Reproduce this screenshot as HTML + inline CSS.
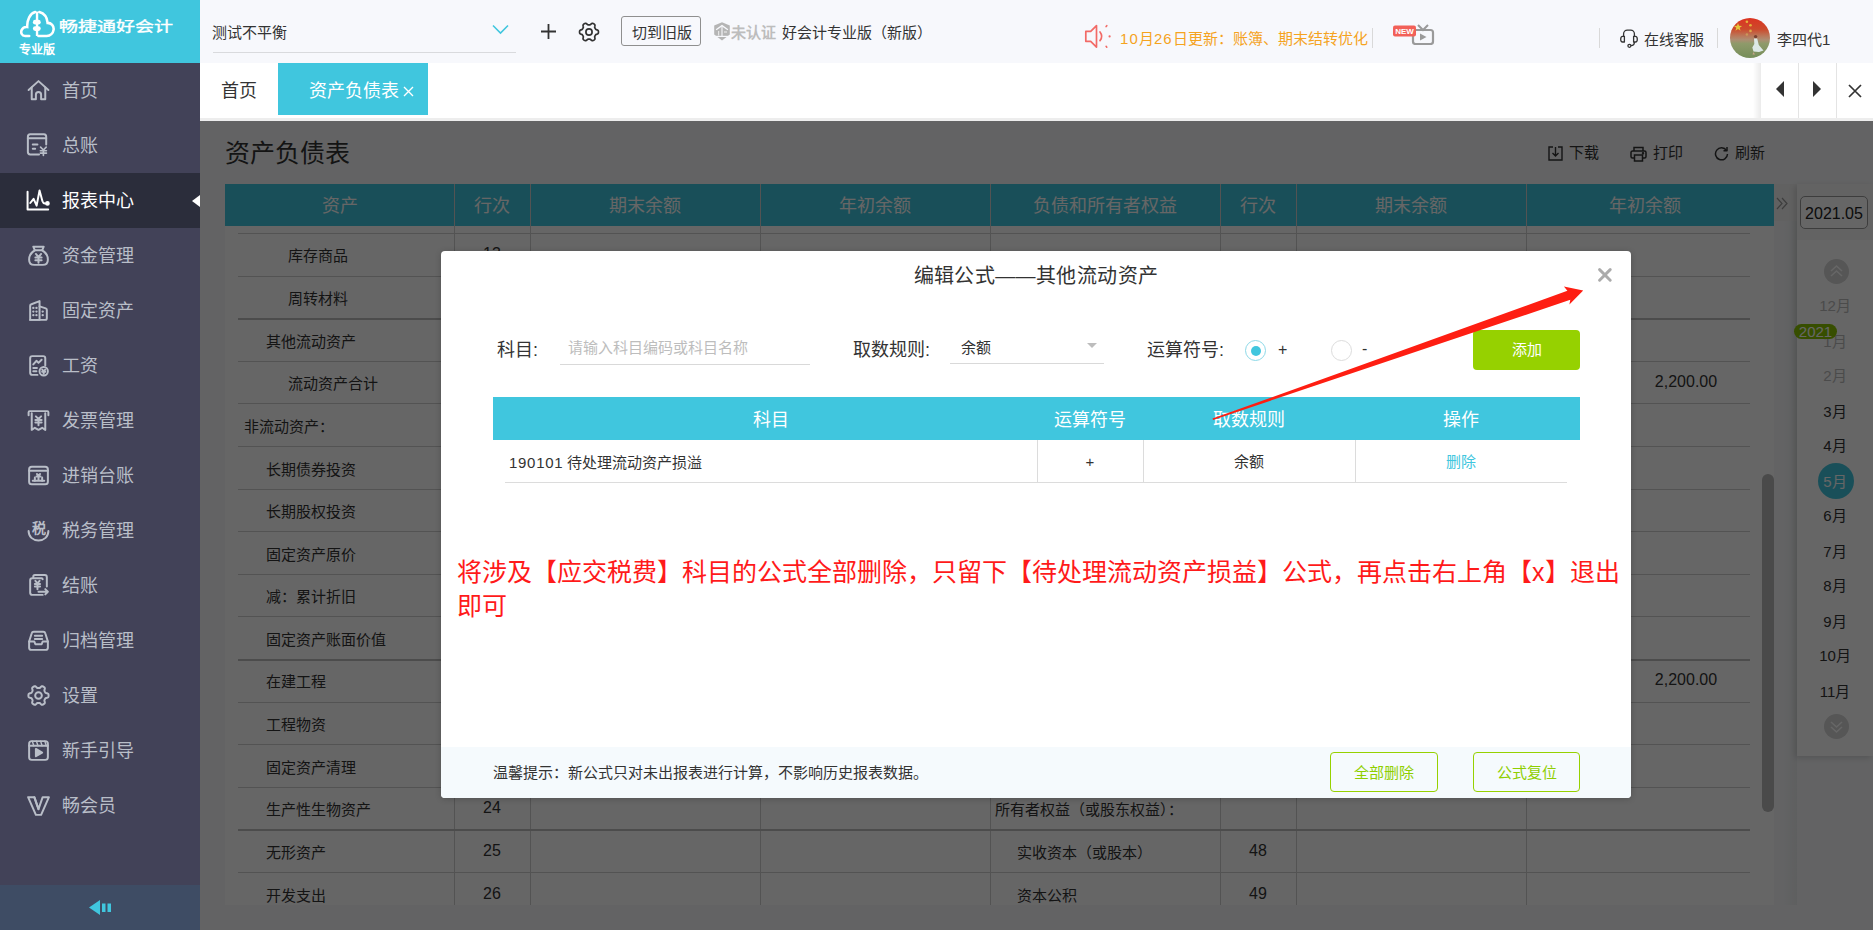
<!DOCTYPE html>
<html lang="zh-CN"><head><meta charset="utf-8">
<style>
*{margin:0;padding:0;box-sizing:border-box}
html,body{width:1873px;height:930px;overflow:hidden;background:#f7f8fc}
body{position:relative;font-family:"Liberation Sans",sans-serif;color:#333}
.a{position:absolute;white-space:nowrap}
.t{line-height:1}
/* sidebar */
#side{position:absolute;left:0;top:0;width:200px;height:930px;background:#424258}
#logo{position:absolute;left:0;top:0;width:200px;height:63px;background:#40c6de}
.mi{position:absolute;left:0;width:200px;height:55px}
.mi .ic{position:absolute;left:26px;top:15px;width:25px;height:25px}
.mi .tx{position:absolute;left:62px;top:19px;font-size:18px;line-height:18px;color:#b9bec8}
.mi.on{background:#2b2d3b}
.mi.on .tx{color:#fff}
#sbot{position:absolute;left:0;top:885px;width:200px;height:45px;background:#3e4c64}
/* header */
#hdr{position:absolute;left:200px;top:0;width:1673px;height:63px;background:#f7f8fc}
#tabs{position:absolute;left:200px;top:63px;width:1673px;height:58px;background:#fff}
/* content */
#content{position:absolute;left:200px;top:121px;width:1673px;height:809px;background:#f7f8fa;overflow:hidden}
#mask{position:absolute;left:200px;top:121px;width:1673px;height:809px;background:rgba(0,0,0,0.6)}
</style></head>
<body>
<div id="side">
  <div id="logo">
    <svg class="a" style="left:20px;top:10px" width="35" height="28" viewBox="0 0 38 30">
      <path d="M10 28 H5.5 C2 28 0.5 24.5 1.8 21.5 C3 18.8 5.5 18 7.8 18.3 C7.5 10.5 11 3.5 16.5 2" fill="none" stroke="#fff" stroke-width="2.8" stroke-linecap="round"/>
      <path d="M21 2 C26.5 3.5 29.5 8.5 30 13.8 C34 13.8 37 17 36.5 21.2 C36 25 33 28 29 28 H20" fill="none" stroke="#fff" stroke-width="2.8" stroke-linecap="round"/>
      <path d="M18.5 1.5 V28" stroke="#fff" stroke-width="2.6"/>
      <rect x="14" y="10.5" width="8.5" height="5" rx="2.5" fill="#fff"/>
      <rect x="14" y="17.5" width="8.5" height="5" rx="2.5" fill="#fff"/>
    </svg>
    <div class="a t" style="left:59px;top:17px;font-size:19px;line-height:19px;color:#fff;-webkit-text-stroke:0.5px #fff;letter-spacing:0px;transform:scaleY(0.72);transform-origin:0 50%">畅捷通好会计</div>
    <div class="a t" style="left:19px;top:44px;font-size:12px;line-height:12px;color:#fff;font-weight:bold">专业版</div>
  </div>
  <div class="mi" style="top:63px"><svg class="ic" width="24" height="24" viewBox="0 0 24 24" fill="none" stroke="#b9bec8" stroke-width="1.9" stroke-linecap="round" stroke-linejoin="round"><path d="M2.5 11.5 L12 3 L21.5 11.5"/><path d="M5.5 9 V20.5 H9.5 V16 A2.5 2.5 0 0 1 14.5 16 V20.5 H18.5 V9"/></svg><div class="tx">首页</div></div>
  <div class="mi" style="top:118px"><svg class="ic" width="24" height="24" viewBox="0 0 24 24" fill="none" stroke="#b9bec8" stroke-width="1.9" stroke-linecap="round" stroke-linejoin="round"><path d="M12.5 20.6 H4 A2.3 2.3 0 0 1 1.8 18.4 V3.6 A2.3 2.3 0 0 1 4 1.3 H17.2 A2.3 2.3 0 0 1 19.4 3.6 V11"/><path d="M1.8 5 H19.4"/><path d="M6.5 11 H11 M6.5 15.2 H8.8"/><path d="M14 13.6 L16.7 16.3 L19.4 13.6 M13.8 17 H19.6 M13.8 19.3 H19.6 M16.7 16.3 V21.5" stroke-width="1.6"/></svg><div class="tx">总账</div></div>
  <div class="mi on" style="top:173px"><svg class="ic" width="24" height="24" viewBox="0 0 24 24" fill="none" stroke="#fff" stroke-width="1.9" stroke-linecap="round" stroke-linejoin="round"><path d="M1.5 3.6 V20.6 H21.3"/><path d="M4.1 14.4 L7.3 10.4 L10.2 16.9 L13 2.4 L15.8 12.8 Q16.4 14.8 18.2 14.8 H20"/><circle cx="20.6" cy="14.8" r="1.3" fill="#fff"/></svg><div class="tx">报表中心</div><svg class="a" style="left:192px;top:22px" width="8" height="12" viewBox="0 0 8 12"><path d="M8 0 L0 6 L8 12 Z" fill="#fff"/></svg></div>
  <div class="mi" style="top:228px"><svg class="ic" width="24" height="24" viewBox="0 0 24 24" fill="none" stroke="#b9bec8" stroke-width="1.9" stroke-linecap="round" stroke-linejoin="round"><path d="M8.5 7 L7 3.5 H17 L15.5 7"/><path d="M8.5 7 C4 9.5 3 13 3 16 C3 19.5 5 21 8 21 H16 C19 21 21 19.5 21 16 C21 13 20 9.5 15.5 7 Z"/><path d="M9.5 10.5 L12 13.5 L14.5 10.5 M9 14 H15 M9 16.5 H15 M12 13.5 V19"/></svg><div class="tx">资金管理</div></div>
  <div class="mi" style="top:283px"><svg class="ic" width="24" height="24" viewBox="0 0 24 24" fill="none" stroke="#b9bec8" stroke-width="1.9" stroke-linecap="round" stroke-linejoin="round"><path d="M4 21 V7.5 A1.5 1.5 0 0 1 5.2 6 L13 3 V21 Z"/><path d="M13 8 L19 10 A1.5 1.5 0 0 1 20 11.5 V19.5 A1.5 1.5 0 0 1 18.5 21 H4"/><path d="M7 9.5 H7.1 M10 9.5 H10.1 M7 13 H7.1 M10 13 H10.1 M7 16.5 H7.1 M10 16.5 H10.1 M16 13 H16.1 M16 16.5 H16.1" stroke-width="2.2"/></svg><div class="tx">固定资产</div></div>
  <div class="mi" style="top:338px"><svg class="ic" width="24" height="24" viewBox="0 0 24 24" fill="none" stroke="#b9bec8" stroke-width="1.9" stroke-linecap="round" stroke-linejoin="round"><path d="M11 21 H6 A2 2 0 0 1 4 19 V5 A2 2 0 0 1 6 3 H16.5 A2 2 0 0 1 18.5 5 V12"/><path d="M7 11 L10 7.5 L12 9.5 L15 6.5"/><path d="M7 14.5 H10.5 M7 17.5 H10"/><circle cx="17" cy="17.5" r="4"/><path d="M15.5 16 L17 17.5 L18.5 16 M15.5 18 H18.5 M17 17.5 V20"/></svg><div class="tx">工资</div></div>
  <div class="mi" style="top:393px"><svg class="ic" width="24" height="24" viewBox="0 0 24 24" fill="none" stroke="#b9bec8" stroke-width="1.9" stroke-linecap="round" stroke-linejoin="round"><path d="M2.5 7 V4 A1 1 0 0 1 3.5 3 H20.5 A1 1 0 0 1 21.5 4 V7"/><path d="M5.5 5 V21 L8.5 19 L12 21 L15.5 19 L18.5 21 V5"/><path d="M9.5 8 L12 10.5 L14.5 8 M9 11.5 H15 M9 14 H15 M12 10.5 V16.5"/></svg><div class="tx">发票管理</div></div>
  <div class="mi" style="top:448px"><svg class="ic" width="24" height="24" viewBox="0 0 24 24" fill="none" stroke="#b9bec8" stroke-width="1.9" stroke-linecap="round" stroke-linejoin="round"><rect x="3" y="3.5" width="18" height="17" rx="2.5"/><path d="M3 7.5 H21"/><path d="M6.5 17 H17.5"/><path d="M8.5 17 V14 M15.5 17 V14"/><path d="M10.5 10.5 L12 12 L13.5 10.5 M10 13 H14 M12 12 V16"/></svg><div class="tx">进销台账</div></div>
  <div class="mi" style="top:503px"><svg class="ic" width="24" height="24" viewBox="0 0 24 24" fill="none" stroke="#b9bec8" stroke-width="1.9" stroke-linecap="round" stroke-linejoin="round"><path d="M2.5 12.5 C2.5 18 6.5 21.5 12 21.5 C17.5 21.5 21.5 18 21.5 12.5"/><text x="12" y="14.5" font-size="13.5" font-weight="bold" text-anchor="middle" fill="#b9bec8" stroke="none" font-family="Liberation Sans,sans-serif">税</text></svg><div class="tx">税务管理</div></div>
  <div class="mi" style="top:558px"><svg class="ic" width="24" height="24" viewBox="0 0 24 24" fill="none" stroke="#b9bec8" stroke-width="1.9" stroke-linecap="round" stroke-linejoin="round"><path d="M7 4 V3.5 A1.5 1.5 0 0 1 8.5 2 H18 A2 2 0 0 1 20 4 V13"/><path d="M16 21 H6 A2 2 0 0 1 4 19 V7 A2 2 0 0 1 6 5 H15 A1 1 0 0 1 16 6"/><path d="M9 7.5 L11 10 L13 7.5 M8.5 10.5 H13.5 M8.5 13 H13.5 M11 10 V15.5"/><path d="M12 18 H21 M18.5 15.5 L21 18 L18.5 20.5"/></svg><div class="tx">结账</div></div>
  <div class="mi" style="top:613px"><svg class="ic" width="24" height="24" viewBox="0 0 24 24" fill="none" stroke="#b9bec8" stroke-width="1.9" stroke-linecap="round" stroke-linejoin="round"><path d="M3 13 L5.5 5 A2 2 0 0 1 7.5 3.5 H16.5 A2 2 0 0 1 18.5 5 L21 13"/><path d="M3 13 V19 A2 2 0 0 0 5 21 H19 A2 2 0 0 0 21 19 V13 H16 L15 15.5 H9 L8 13 Z"/><path d="M8.5 7.5 H15.5 M8.5 10.5 H15.5"/></svg><div class="tx">归档管理</div></div>
  <div class="mi" style="top:668px"><svg class="ic" width="24" height="24" viewBox="0 0 24 24" fill="none" stroke="#b9bec8" stroke-width="1.9" stroke-linecap="round" stroke-linejoin="round"><path d="M21.70 12.00 L21.66 12.63 L21.52 13.25 L21.09 13.81 L20.11 14.17 L19.13 14.42 L18.65 14.76 L18.38 15.15 L18.15 15.55 L17.92 15.95 L17.71 16.38 L17.66 16.97 L17.94 17.94 L18.11 18.97 L17.84 19.61 L17.38 20.05 L16.85 20.40 L16.28 20.68 L15.67 20.87 L14.98 20.78 L14.17 20.11 L13.47 19.39 L12.94 19.14 L12.47 19.10 L12.00 19.10 L11.53 19.10 L11.06 19.14 L10.53 19.39 L9.83 20.11 L9.02 20.78 L8.33 20.87 L7.72 20.68 L7.15 20.40 L6.62 20.05 L6.16 19.61 L5.89 18.97 L6.06 17.94 L6.34 16.97 L6.29 16.38 L6.08 15.95 L5.85 15.55 L5.62 15.15 L5.35 14.76 L4.87 14.42 L3.89 14.17 L2.91 13.81 L2.48 13.25 L2.34 12.63 L2.30 12.00 L2.34 11.37 L2.48 10.75 L2.91 10.19 L3.89 9.83 L4.87 9.58 L5.35 9.24 L5.62 8.85 L5.85 8.45 L6.08 8.05 L6.29 7.62 L6.34 7.03 L6.06 6.06 L5.89 5.03 L6.16 4.39 L6.62 3.95 L7.15 3.60 L7.72 3.32 L8.33 3.13 L9.02 3.22 L9.83 3.89 L10.53 4.61 L11.06 4.86 L11.53 4.90 L12.00 4.90 L12.47 4.90 L12.94 4.86 L13.47 4.61 L14.17 3.89 L14.98 3.22 L15.67 3.13 L16.28 3.32 L16.85 3.60 L17.38 3.95 L17.84 4.39 L18.11 5.03 L17.94 6.06 L17.66 7.03 L17.71 7.62 L17.92 8.05 L18.15 8.45 L18.38 8.85 L18.65 9.24 L19.13 9.58 L20.11 9.83 L21.09 10.19 L21.52 10.75 L21.66 11.37 L21.70 12.00 Z"/><circle cx="12" cy="12" r="3.2"/></svg><div class="tx">设置</div></div>
  <div class="mi" style="top:723px"><svg class="ic" width="24" height="24" viewBox="0 0 24 24" fill="none" stroke="#b9bec8" stroke-width="1.9" stroke-linecap="round" stroke-linejoin="round"><rect x="3" y="3" width="18" height="18" rx="2.5"/><path d="M3 7.5 H21"/><path d="M6 3 L7.5 7.5 M10 3 L11.5 7.5 M14 3 L15.5 7.5 M18 3 L19.5 7.5" stroke-width="1.4"/><path d="M9.5 10.5 L15.5 14 L9.5 17.5 Z" fill="#b9bec8"/></svg><div class="tx">新手引导</div></div>
  <div class="mi" style="top:778px"><svg class="ic" width="24" height="24" viewBox="0 0 24 24" fill="none" stroke="#b9bec8" stroke-width="1.9" stroke-linecap="round" stroke-linejoin="round"><path d="M2 4 H8 L12 15.5 L16 4 H22 L14.5 21 H9.5 Z"/><path d="M8 4 L12 15.5" /></svg><div class="tx">畅会员</div></div>
  <div id="sbot">
    <svg class="a" style="left:88px;top:13px" width="24" height="19" viewBox="0 0 24 19">
      <path d="M1 9.5 L12 2 V17 Z" fill="#40c6de"/>
      <rect x="14" y="5.5" width="3.5" height="8.5" fill="#40c6de"/>
      <rect x="19.5" y="5.5" width="3.5" height="8.5" fill="#40c6de"/>
    </svg>
  </div>
</div>

<div id="hdr">
    <div class="a t" style="left:12px;top:25px;font-size:15px;line-height:15px;color:#333">测试不平衡</div>
  <div class="a" style="left:13px;top:52px;width:303px;height:1px;background:#d9dadd"></div>
  <svg class="a" style="left:292px;top:24px" width="17" height="11" viewBox="0 0 17 11"><path d="M1 1.5 L8.5 9 L16 1.5" fill="none" stroke="#40c6de" stroke-width="1.6"/></svg>
  <svg class="a" style="left:340px;top:23px" width="17" height="17" viewBox="0 0 17 17"><path d="M8.5 1 V16 M1 8.5 H16" stroke="#333" stroke-width="1.8"/></svg>
  <svg class="a" style="left:377px;top:19.5px" width="24" height="24" viewBox="0 0 24 24" fill="none" stroke="#333" stroke-width="1.7" stroke-linejoin="round"><path d="M21.45 12.00 L21.41 12.62 L21.28 13.22 L20.89 13.77 L20.02 14.15 L19.13 14.42 L18.69 14.77 L18.43 15.17 L18.19 15.57 L17.96 15.98 L17.74 16.41 L17.66 16.97 L17.87 17.87 L17.98 18.82 L17.70 19.43 L17.24 19.84 L16.73 20.18 L16.17 20.46 L15.58 20.65 L14.91 20.59 L14.15 20.02 L13.47 19.39 L12.95 19.18 L12.47 19.15 L12.00 19.15 L11.53 19.15 L11.05 19.18 L10.53 19.39 L9.85 20.02 L9.09 20.59 L8.42 20.65 L7.83 20.46 L7.28 20.18 L6.76 19.84 L6.30 19.43 L6.02 18.82 L6.13 17.87 L6.34 16.97 L6.26 16.41 L6.04 15.98 L5.81 15.57 L5.57 15.17 L5.31 14.77 L4.87 14.42 L3.98 14.15 L3.11 13.77 L2.72 13.22 L2.59 12.62 L2.55 12.00 L2.59 11.38 L2.72 10.78 L3.11 10.23 L3.98 9.85 L4.87 9.58 L5.31 9.23 L5.57 8.83 L5.81 8.43 L6.04 8.02 L6.26 7.59 L6.34 7.03 L6.13 6.13 L6.02 5.18 L6.30 4.57 L6.76 4.16 L7.27 3.82 L7.83 3.54 L8.42 3.35 L9.09 3.41 L9.85 3.98 L10.53 4.61 L11.05 4.82 L11.53 4.85 L12.00 4.85 L12.47 4.85 L12.95 4.82 L13.47 4.61 L14.15 3.98 L14.91 3.41 L15.58 3.35 L16.17 3.54 L16.73 3.82 L17.24 4.16 L17.70 4.57 L17.98 5.18 L17.87 6.13 L17.66 7.03 L17.74 7.59 L17.96 8.02 L18.19 8.42 L18.43 8.83 L18.69 9.23 L19.13 9.58 L20.02 9.85 L20.89 10.23 L21.28 10.78 L21.41 11.38 L21.45 12.00 Z"/><circle cx="12" cy="12" r="3.1"/></svg>
  <div class="a" style="left:421px;top:16px;width:80px;height:30px;border:1px solid #8f8f8f;border-radius:3px"></div>
  <div class="a t" style="left:432px;top:25px;font-size:15px;line-height:15px;color:#333">切到旧版</div>
  <svg class="a" style="left:513px;top:21px" width="18" height="21" viewBox="0 0 18 21"><path d="M9 1.2 L16.8 4.4 V13.6 L9 19.6 L1.2 13.6 V4.4 Z" fill="#b5b5b5"/><path d="M3.1 8.8 L9 4.6 L14.9 8.8" fill="none" stroke="#f7f8fc" stroke-width="1.3"/><path d="M9 5.5 V15.3" stroke="#f7f8fc" stroke-width="1.1"/><path d="M5.6 10 V14.6" stroke="#e4e4e4" stroke-width="1.2"/><path d="M11 11 H14" stroke="#e4e4e4" stroke-width="1.3"/><path d="M2.4 15.4 H15.6" stroke="#f7f8fc" stroke-width="1.2"/></svg>
  <div class="a t" style="left:531px;top:25px;font-size:15px;line-height:15px;color:#bdbdbd;font-weight:bold">未认证</div>
  <div class="a t" style="left:582px;top:25px;font-size:15px;line-height:15px;color:#333">好会计专业版（新版）</div>
  <svg class="a" style="left:884px;top:24px" width="28" height="25" viewBox="0 0 28 25" fill="none" stroke="#f26a66" stroke-width="1.7" stroke-linejoin="round" stroke-linecap="round"><path d="M1.8 7.4 H6.7 L12.5 1.6 V23.1 L6.7 17.3 H1.8 Z"/><path d="M16 8 Q19.4 12.4 16 16.6"/><path d="M22.1 2.6 L22.8 1.7 M22.1 22.3 L22.8 23.2" stroke-width="1.6"/><circle cx="25.6" cy="12.4" r="1.1" fill="#f26a66" stroke="none"/></svg>
  <div class="a t" style="left:920px;top:31px;font-size:15px;line-height:15px;color:#f5a31e"><span style="letter-spacing:1.1px">10</span>月<span style="letter-spacing:1.1px">26</span>日更新：账簿、期末结转优化</div>
  <div class="a" style="left:1172px;top:28px;width:1px;height:20px;background:#d9d9d9"></div>
  <svg class="a" style="left:1193px;top:23px" width="42" height="22" viewBox="0 0 42 22"><rect x="20" y="7" width="20" height="14" rx="2.5" fill="none" stroke="#9a9a9a" stroke-width="2.2"/><path d="M25 2 L30 7 L35 2" fill="none" stroke="#9a9a9a" stroke-width="2"/><path d="M27 10.5 L33.5 14 L27 17.5 Z" fill="#9a9a9a"/><rect x="0" y="2.5" width="23" height="11" rx="2" fill="#f26058"/><text x="11.5" y="11.2" font-size="8" font-weight="bold" fill="#fff" text-anchor="middle" font-family="Liberation Sans,sans-serif">NEW</text></svg>
  <div class="a" style="left:1399px;top:28px;width:1px;height:20px;background:#d9d9d9"></div>
  <svg class="a" style="left:1418px;top:27px" width="22" height="22" viewBox="0 0 22 22" fill="none" stroke="#333" stroke-width="1.3" stroke-linejoin="round"><path d="M5.6 9.3 V6.8 A3.7 3.7 0 0 1 9.3 3.1 H12.7 A3.7 3.7 0 0 1 16.4 6.8 V9.3"/><path d="M6.4 9.3 H4.6 A1.9 2.85 0 0 0 4.6 15 H6.4 Z"/><path d="M15.6 9.3 H17.4 A1.9 2.85 0 0 1 17.4 15 H15.6 Z"/><path d="M16.4 15 C16.4 17.3 14.8 18.7 12.9 18.7"/><circle cx="11.4" cy="18.8" r="1.5"/></svg>
  <div class="a t" style="left:1444px;top:32px;font-size:15px;line-height:15px;color:#333">在线客服</div>
  <div class="a" style="left:1517px;top:28px;width:1px;height:20px;background:#d9d9d9"></div>
  <div class="a" style="left:1530px;top:18px;width:40px;height:40px;border-radius:50%;overflow:hidden;background:linear-gradient(180deg,#dc3321 0%,#cc4a2c 28%,#bb7658 44%,#ae8d72 54%,#8e9a6a 64%,#768e5a 100%)">
    <svg width="40" height="40" viewBox="0 0 40 40" style="position:absolute;left:0;top:0"><path d="M8.00 5.00 L9.06 7.84 L12.09 7.97 L9.71 9.86 L10.53 12.78 L8.00 11.10 L5.47 12.78 L6.29 9.86 L3.91 7.97 L6.94 7.84 Z" fill="#e6c53a"/><circle cx="16.9" cy="3.8" r="1.3" fill="#e2b43a"/><circle cx="20.5" cy="7.3" r="1.3" fill="#e2b43a"/><circle cx="20.5" cy="12.9" r="1.3" fill="#dca848"/><circle cx="16.9" cy="16.5" r="1.2" fill="#c9995a"/><circle cx="25.6" cy="18.6" r="1.7" fill="#7a4030"/><path d="M24 20.5 L27.2 20.5 L28.8 27 L33.5 32.5 L29 34 L23.5 33.5 L22.3 29.5 L24.3 26 Z" fill="#dde8e6"/><path d="M23.5 34 L22.5 36.5 L25 36.5 Z" fill="#c8a58a"/></svg>
  </div>
  <div class="a t" style="left:1577px;top:32px;font-size:15px;line-height:15px;color:#333">李四代1</div>

</div>

<div id="tabs">
    <div class="a t" style="left:21px;top:19px;font-size:18px;line-height:18px;color:#333">首页</div>
  <div class="a" style="left:78px;top:0;width:150px;height:52px;background:#40c6de"></div>
  <div class="a t" style="left:109px;top:19px;font-size:18px;line-height:18px;color:#fff">资产负债表</div>
  <svg class="a" style="left:203px;top:23px" width="11" height="11" viewBox="0 0 11 11"><path d="M1 1 L10 10 M10 1 L1 10" stroke="#fff" stroke-width="1.4"/></svg>
  <div class="a" style="left:0;top:55px;width:1673px;height:3px;background:#ededed"></div>
  <div class="a" style="left:1553px;top:0;width:8px;height:55px;background:linear-gradient(90deg,rgba(0,0,0,0),rgba(0,0,0,0.08))"></div>
  <div class="a" style="left:1561px;top:0;width:112px;height:55px;background:#fff"></div>
  <div class="a" style="left:1598px;top:0;width:1px;height:55px;background:#e4e4e4"></div>
  <div class="a" style="left:1636px;top:0;width:1px;height:55px;background:#e4e4e4"></div>
  <svg class="a" style="left:1576px;top:18px" width="8" height="16" viewBox="0 0 8 16"><path d="M8 0 L0 8 L8 16 Z" fill="#333"/></svg>
  <svg class="a" style="left:1613px;top:18px" width="8" height="16" viewBox="0 0 8 16"><path d="M0 0 L8 8 L0 16 Z" fill="#333"/></svg>
  <svg class="a" style="left:1648px;top:21px" width="14" height="14" viewBox="0 0 14 14"><path d="M1 1 L13 13 M13 1 L1 13" stroke="#333" stroke-width="1.7"/></svg>

</div>

<div id="content">
  <div class="a" style="left:25px;top:20px;font-size:25px;line-height:25px;color:#333">资产负债表</div>
  <div class="a" style="left:1348px;top:25px;width:15px;height:15px"><svg width="15" height="15" viewBox="0 0 15 15" fill="none" stroke="#333" stroke-width="1.4"><path d="M5 1 H1 V14 H14 V1 H10"/><path d="M7.5 1 V10 M4.5 7 L7.5 10 L10.5 7"/></svg></div>
  <div class="a" style="left:1369px;top:24px;font-size:15px;line-height:15px;color:#333">下载</div>
  <div class="a" style="left:1430px;top:25px;width:17px;height:16px"><svg width="17" height="16" viewBox="0 0 17 16" fill="none" stroke="#333" stroke-width="1.5"><path d="M4 5 V1.5 H13 V5"/><path d="M4 12 H2.5 A1.5 1.5 0 0 1 1 10.5 V6.5 A1.5 1.5 0 0 1 2.5 5 H14.5 A1.5 1.5 0 0 1 16 6.5 V10.5 A1.5 1.5 0 0 1 14.5 12 H13"/><rect x="4.5" y="9" width="8" height="6"/><circle cx="13" cy="7.3" r="0.5" fill="#333"/></svg></div>
  <div class="a" style="left:1453px;top:24px;font-size:15px;line-height:15px;color:#333">打印</div>
  <div class="a" style="left:1514px;top:25px;width:15px;height:15px"><svg width="15" height="15" viewBox="0 0 15 15" fill="none" stroke="#333" stroke-width="1.5"><path d="M12.5 4.5 A6 6 0 1 0 13.5 8"/><path d="M13 1 V4.8 H9.5" stroke-linejoin="round"/></svg></div>
  <div class="a" style="left:1535px;top:24px;font-size:15px;line-height:15px;color:#333">刷新</div>
  <div class="a" style="left:25px;top:105px;width:1549px;height:679px;background:#fff"></div>
  <div class="a" style="left:25px;top:63px;width:1549px;height:42px;background:#40c6de"></div>
  <div class="a" style="left:25px;top:76px;width:229px;text-align:center;font-size:18px;line-height:18px;color:#fff">资产</div>
  <div class="a" style="left:254px;top:76px;width:76px;text-align:center;font-size:18px;line-height:18px;color:#fff">行次</div>
  <div class="a" style="left:330px;top:76px;width:230px;text-align:center;font-size:18px;line-height:18px;color:#fff">期末余额</div>
  <div class="a" style="left:560px;top:76px;width:230px;text-align:center;font-size:18px;line-height:18px;color:#fff">年初余额</div>
  <div class="a" style="left:790px;top:76px;width:230px;text-align:center;font-size:18px;line-height:18px;color:#fff">负债和所有者权益</div>
  <div class="a" style="left:1020px;top:76px;width:76px;text-align:center;font-size:18px;line-height:18px;color:#fff">行次</div>
  <div class="a" style="left:1096px;top:76px;width:230px;text-align:center;font-size:18px;line-height:18px;color:#fff">期末余额</div>
  <div class="a" style="left:1326px;top:76px;width:238px;text-align:center;font-size:18px;line-height:18px;color:#fff">年初余额</div>
  <div class="a" style="left:254px;top:63px;width:1px;height:721px;background:#cfcfcf"></div>
  <div class="a" style="left:330px;top:63px;width:1px;height:721px;background:#cfcfcf"></div>
  <div class="a" style="left:560px;top:63px;width:1px;height:721px;background:#cfcfcf"></div>
  <div class="a" style="left:790px;top:63px;width:1px;height:721px;background:#cfcfcf"></div>
  <div class="a" style="left:1020px;top:63px;width:1px;height:721px;background:#cfcfcf"></div>
  <div class="a" style="left:1096px;top:63px;width:1px;height:721px;background:#cfcfcf"></div>
  <div class="a" style="left:1326px;top:63px;width:1px;height:721px;background:#cfcfcf"></div>
  <div class="a" style="left:88px;top:126.5px;font-size:15px;line-height:15px;color:#333">库存商品</div>
  <div class="a" style="left:254px;top:125.0px;width:76px;text-align:center;font-size:16px;line-height:16px;color:#333">13</div>
  <div class="a" style="left:88px;top:169.5px;font-size:15px;line-height:15px;color:#333">周转材料</div>
  <div class="a" style="left:66px;top:212.5px;font-size:15px;line-height:15px;color:#333">其他流动资产</div>
  <div class="a" style="left:88px;top:254.5px;font-size:15px;line-height:15px;color:#333">流动资产合计</div>
  <div class="a" style="left:1326px;top:253.0px;width:320px;text-align:center;font-size:16px;line-height:16px;color:#333">2,200.00</div>
  <div class="a" style="left:44px;top:297.5px;font-size:15px;line-height:15px;color:#333">非流动资产：</div>
  <div class="a" style="left:66px;top:340.5px;font-size:15px;line-height:15px;color:#333">长期债券投资</div>
  <div class="a" style="left:66px;top:382.5px;font-size:15px;line-height:15px;color:#333">长期股权投资</div>
  <div class="a" style="left:66px;top:425.5px;font-size:15px;line-height:15px;color:#333">固定资产原价</div>
  <div class="a" style="left:66px;top:467.5px;font-size:15px;line-height:15px;color:#333">减：累计折旧</div>
  <div class="a" style="left:66px;top:510.5px;font-size:15px;line-height:15px;color:#333">固定资产账面价值</div>
  <div class="a" style="left:66px;top:552.5px;font-size:15px;line-height:15px;color:#333">在建工程</div>
  <div class="a" style="left:1326px;top:551.0px;width:320px;text-align:center;font-size:16px;line-height:16px;color:#333">2,200.00</div>
  <div class="a" style="left:66px;top:595.5px;font-size:15px;line-height:15px;color:#333">工程物资</div>
  <div class="a" style="left:66px;top:638.5px;font-size:15px;line-height:15px;color:#333">固定资产清理</div>
  <div class="a" style="left:66px;top:680.5px;font-size:15px;line-height:15px;color:#333">生产性生物资产</div>
  <div class="a" style="left:254px;top:679.0px;width:76px;text-align:center;font-size:16px;line-height:16px;color:#333">24</div>
  <div class="a" style="left:795px;top:680.5px;font-size:15px;line-height:15px;color:#333">所有者权益（或股东权益）：</div>
  <div class="a" style="left:66px;top:723.5px;font-size:15px;line-height:15px;color:#333">无形资产</div>
  <div class="a" style="left:254px;top:722.0px;width:76px;text-align:center;font-size:16px;line-height:16px;color:#333">25</div>
  <div class="a" style="left:817px;top:723.5px;font-size:15px;line-height:15px;color:#333">实收资本（或股本）</div>
  <div class="a" style="left:1020px;top:722.0px;width:76px;text-align:center;font-size:16px;line-height:16px;color:#333">48</div>
  <div class="a" style="left:66px;top:766.5px;font-size:15px;line-height:15px;color:#333">开发支出</div>
  <div class="a" style="left:254px;top:765.0px;width:76px;text-align:center;font-size:16px;line-height:16px;color:#333">26</div>
  <div class="a" style="left:817px;top:766.5px;font-size:15px;line-height:15px;color:#333">资本公积</div>
  <div class="a" style="left:1020px;top:765.0px;width:76px;text-align:center;font-size:16px;line-height:16px;color:#333">49</div>
  <div class="a" style="left:38px;top:112px;width:1512px;height:1px;background:#d0d0d0"></div>
  <div class="a" style="left:38px;top:155px;width:1512px;height:1px;background:#d0d0d0"></div>
  <div class="a" style="left:38px;top:197px;width:1512px;height:2px;background:#bdbdbd"></div>
  <div class="a" style="left:38px;top:240px;width:1512px;height:1px;background:#d0d0d0"></div>
  <div class="a" style="left:38px;top:282px;width:1512px;height:1px;background:#d0d0d0"></div>
  <div class="a" style="left:38px;top:325px;width:1512px;height:1px;background:#d0d0d0"></div>
  <div class="a" style="left:38px;top:368px;width:1512px;height:1px;background:#d0d0d0"></div>
  <div class="a" style="left:38px;top:410px;width:1512px;height:1px;background:#d0d0d0"></div>
  <div class="a" style="left:38px;top:453px;width:1512px;height:1px;background:#d0d0d0"></div>
  <div class="a" style="left:38px;top:495px;width:1512px;height:1px;background:#d0d0d0"></div>
  <div class="a" style="left:38px;top:538px;width:1512px;height:2px;background:#bdbdbd"></div>
  <div class="a" style="left:38px;top:581px;width:1512px;height:1px;background:#d0d0d0"></div>
  <div class="a" style="left:38px;top:623px;width:1512px;height:1px;background:#d0d0d0"></div>
  <div class="a" style="left:38px;top:666px;width:1512px;height:1px;background:#d0d0d0"></div>
  <div class="a" style="left:38px;top:708px;width:1512px;height:2px;background:#bdbdbd"></div>
  <div class="a" style="left:38px;top:751px;width:1512px;height:1px;background:#d0d0d0"></div>
  <div class="a" style="left:1574px;top:63px;width:23px;height:37px;background:#f2f2f2"></div>
  <div class="a" style="left:1574px;top:100px;width:23px;height:684px;background:linear-gradient(90deg,#f7f8fa 40%,#eceef0)"></div>
  <div class="a" style="left:1576px;top:75px;width:13px;height:13px"><svg width="13" height="13" viewBox="0 0 13 13" fill="none" stroke="#999" stroke-width="1.2"><path d="M1 1 L6 6.5 L1 12 M6 1 L11 6.5 L6 12"/></svg></div>
  <div class="a" style="left:1562px;top:353px;width:12px;height:338px;background:#b8b8b8;border-radius:6px"></div>
  <div class="a" style="left:1597px;top:63px;width:76px;height:572px;background:#fff;box-shadow:-2px 2px 6px rgba(0,0,0,0.15)"></div>
  <div class="a" style="left:1597px;top:63px;width:76px;height:56px;background:#f7f7f7"></div>
  <div class="a" style="left:1600px;top:75px;width:68px;height:33px;border:1px solid #999;border-radius:5px;background:#fff"></div>
  <div class="a" style="left:1600px;top:85px;width:68px;text-align:center;font-size:16px;line-height:16px;color:#222">2021.05</div>
  <div class="a" style="left:1624px;top:138px;width:25px;height:25px"><svg width="25" height="25" viewBox="0 0 25 25"><circle cx="12.5" cy="12.5" r="12.5" fill="#d6d6d6"/><path d="M7 12 L12.5 7 L18 12 M7 17 L12.5 12 L18 17" fill="none" stroke="#fff" stroke-width="1.6"/></svg></div>
  <div class="a" style="left:1624px;top:593px;width:25px;height:25px"><svg width="25" height="25" viewBox="0 0 25 25"><circle cx="12.5" cy="12.5" r="12.5" fill="#d6d6d6"/><path d="M7 8 L12.5 13 L18 8 M7 13 L12.5 18 L18 13" fill="none" stroke="#fff" stroke-width="1.6"/></svg></div>
  <div class="a" style="left:1597px;top:177px;width:76px;text-align:center;font-size:15px;line-height:15px;color:#bbb">12月</div>
  <div class="a" style="left:1597px;top:213px;width:76px;text-align:center;font-size:15px;line-height:15px;color:#bbb">1月</div>
  <div class="a" style="left:1597px;top:247px;width:76px;text-align:center;font-size:15px;line-height:15px;color:#bbb">2月</div>
  <div class="a" style="left:1597px;top:283px;width:76px;text-align:center;font-size:15px;line-height:15px;color:#333">3月</div>
  <div class="a" style="left:1597px;top:317px;width:76px;text-align:center;font-size:15px;line-height:15px;color:#333">4月</div>
  <div class="a" style="left:1618px;top:342px;width:36px;height:36px;border-radius:50%;background:#40c6de"></div>
  <div class="a" style="left:1597px;top:353px;width:76px;text-align:center;font-size:15px;line-height:15px;color:#fff">5月</div>
  <div class="a" style="left:1597px;top:387px;width:76px;text-align:center;font-size:15px;line-height:15px;color:#333">6月</div>
  <div class="a" style="left:1597px;top:423px;width:76px;text-align:center;font-size:15px;line-height:15px;color:#333">7月</div>
  <div class="a" style="left:1597px;top:457px;width:76px;text-align:center;font-size:15px;line-height:15px;color:#333">8月</div>
  <div class="a" style="left:1597px;top:493px;width:76px;text-align:center;font-size:15px;line-height:15px;color:#333">9月</div>
  <div class="a" style="left:1597px;top:527px;width:76px;text-align:center;font-size:15px;line-height:15px;color:#333">10月</div>
  <div class="a" style="left:1597px;top:563px;width:76px;text-align:center;font-size:15px;line-height:15px;color:#333">11月</div>
  <div class="a" style="left:1594px;top:203px;width:43px;height:15px;border-radius:8px;background:#8ac400;color:#fff;font-size:15px;line-height:15px;text-align:center">2021</div>
</div>
<div id="mask"></div>
<div class="a" style="left:441px;top:251px;width:1190px;height:547px;background:#fff;border-radius:4px;box-shadow:0 1px 6px rgba(0,0,0,0.2);overflow:hidden">
  <div class="a" style="left:0;top:496px;width:1190px;height:51px;background:#f5fafd"></div>
</div>
<div class="a t" style="left:441px;top:266px;width:1190px;text-align:center;font-size:20px;line-height:20px;letter-spacing:0.4px;color:#333">编辑公式——其他流动资产</div>
<svg class="a" style="left:1598px;top:267.5px" width="14" height="14" viewBox="0 0 14 14"><path d="M1.6 1.6 L12.2 12.2 M12.2 1.6 L1.6 12.2" stroke="#ababab" stroke-width="2.9" stroke-linecap="round"/></svg>
<div class="a t" style="left:497px;top:341px;font-size:18px;line-height:18px;color:#333">科目:</div>
<div class="a" style="left:560px;top:364px;width:250px;height:1px;background:#d9d9d9"></div>
<div class="a t" style="left:568px;top:340px;font-size:15px;line-height:15px;color:#bdbdbd">请输入科目编码或科目名称</div>
<div class="a t" style="left:853px;top:341px;font-size:18px;line-height:18px;color:#333">取数规则:</div>
<div class="a" style="left:950px;top:363px;width:154px;height:1px;background:#d9d9d9"></div>
<div class="a t" style="left:961px;top:340px;font-size:15px;line-height:15px;color:#333">余额</div>
<svg class="a" style="left:1087px;top:343px" width="10" height="5" viewBox="0 0 10 5"><path d="M0 0 H10 L5 5 Z" fill="#bdbdbd"/></svg>
<div class="a t" style="left:1147px;top:341px;font-size:18px;line-height:18px;color:#333">运算符号:</div>
<div class="a" style="left:1245px;top:340px;width:21px;height:21px;border-radius:50%;border:1.5px solid #8dd9e8;background:#fff"></div>
<div class="a" style="left:1250.5px;top:345.5px;width:10px;height:10px;border-radius:50%;background:#40c6de"></div>
<div class="a t" style="left:1278px;top:342px;font-size:16px;line-height:16px;color:#333">+</div>
<div class="a" style="left:1331px;top:340px;width:21px;height:21px;border-radius:50%;border:1.5px solid #dcdcdc;background:#fff"></div>
<div class="a t" style="left:1362px;top:341px;font-size:16px;line-height:16px;color:#333">-</div>
<div class="a" style="left:1473px;top:330px;width:107px;height:40px;border-radius:4px;background:#96d100"></div>
<div class="a t" style="left:1473px;top:342px;width:107px;text-align:center;font-size:15px;line-height:15px;color:#fff">添加</div>
<div class="a" style="left:493px;top:397px;width:1087px;height:43px;background:#40c6de"></div>
<div class="a t" style="left:505px;top:411px;width:532px;text-align:center;font-size:18px;line-height:18px;color:#fff">科目</div>
<div class="a t" style="left:1037px;top:411px;width:106px;text-align:center;font-size:18px;line-height:18px;color:#fff">运算符号</div>
<div class="a t" style="left:1143px;top:411px;width:212px;text-align:center;font-size:18px;line-height:18px;color:#fff">取数规则</div>
<div class="a t" style="left:1355px;top:411px;width:212px;text-align:center;font-size:18px;line-height:18px;color:#fff">操作</div>
<div class="a" style="left:1037px;top:440px;width:1px;height:42px;background:#dcdcdc"></div>
<div class="a" style="left:1143px;top:440px;width:1px;height:42px;background:#dcdcdc"></div>
<div class="a" style="left:1355px;top:440px;width:1px;height:42px;background:#dcdcdc"></div>
<div class="a" style="left:505px;top:482px;width:1062px;height:1px;background:#dcdcdc"></div>
<div class="a t" style="left:509px;top:455px;font-size:15px;line-height:15px;color:#333"><span style="letter-spacing:0.7px">190101</span> 待处理流动资产损溢</div>
<div class="a t" style="left:1037px;top:454px;width:106px;text-align:center;font-size:15px;line-height:15px;color:#333">+</div>
<div class="a t" style="left:1143px;top:454px;width:212px;text-align:center;font-size:15px;line-height:15px;color:#333">余额</div>
<div class="a t" style="left:1355px;top:454px;width:212px;text-align:center;font-size:15px;line-height:15px;color:#40c6de">删除</div>
<div class="a" style="left:457px;top:556px;width:1170px;white-space:normal;font-size:25px;line-height:33.6px;color:#ff1a1a">将涉及【应交税费】科目的公式全部删除，只留下【待处理流动资产损益】公式，再点击右上角【x】退出即可</div>
<div class="a t" style="left:493px;top:765px;font-size:15px;line-height:15px;color:#333">温馨提示：新公式只对未出报表进行计算，不影响历史报表数据。</div>
<div class="a" style="left:1330px;top:752px;width:108px;height:40px;border:1px solid #96d100;border-radius:4px"></div>
<div class="a t" style="left:1330px;top:765px;width:108px;text-align:center;font-size:15px;line-height:15px;color:#8fcf00">全部删除</div>
<div class="a" style="left:1473px;top:752px;width:107px;height:40px;border:1px solid #96d100;border-radius:4px"></div>
<div class="a t" style="left:1473px;top:765px;width:107px;text-align:center;font-size:15px;line-height:15px;color:#8fcf00">公式复位</div>
<svg class="a" style="left:0;top:0" width="1873" height="930" viewBox="0 0 1873 930"><path d="M1212.5 418.6 L1567.4 290.8 L1563.9 286.6 L1583.2 290.5 L1569.4 304.5 L1570.3 299.8 L1213 420 Z" fill="#fe1e12"/></svg>

</body></html>
